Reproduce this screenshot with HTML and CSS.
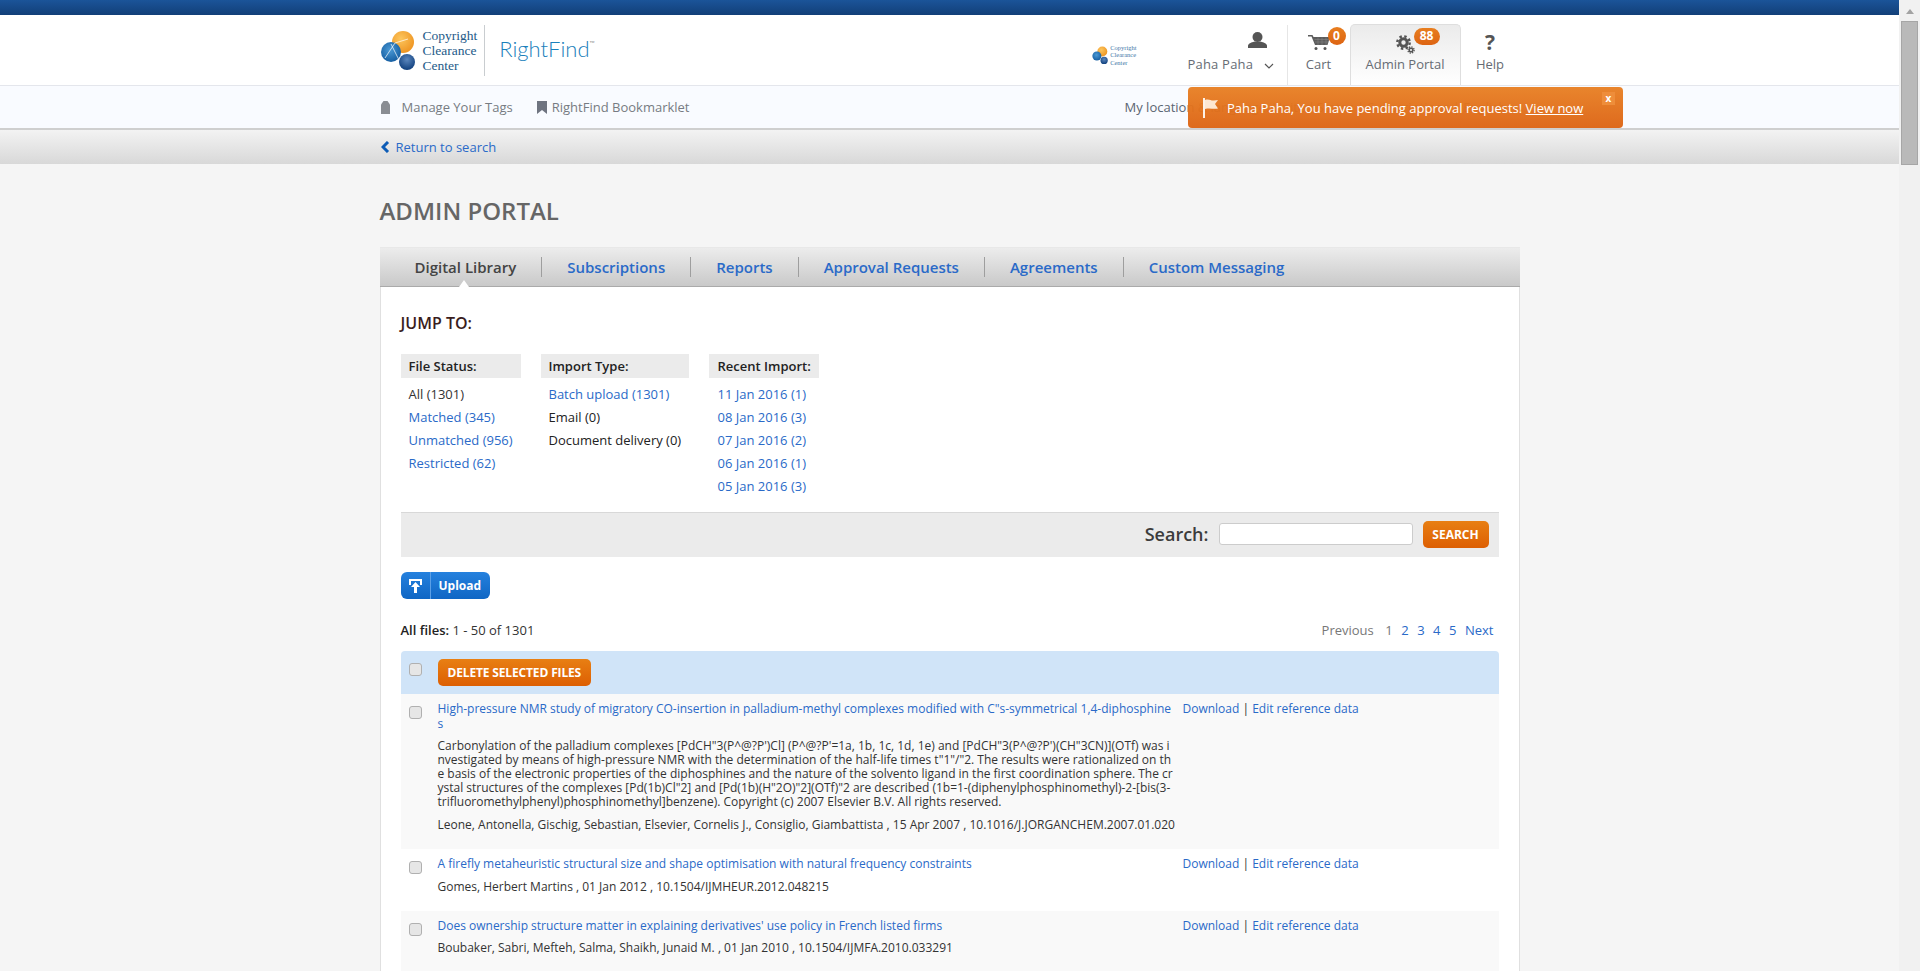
FILE: index.html
```html
<!DOCTYPE html>
<html lang="en">
<head>
  <meta charset="UTF-8" />
  <title>RightFind - Admin Portal</title>
  <link rel="stylesheet" href="styles.css">
</head>
<body>

  <div class="page">
    <div class="topbar"></div>

    <header class="header">
      <div class="wrap header-row">
        <a class="logo">
          <svg class="logo-balls" width="36" height="42" viewBox="0 0 36 42">
            <defs>
              <radialGradient id="orange" cx="40%" cy="35%" r="70%"><stop offset="0" stop-color="#fcc65e"/><stop offset="1" stop-color="#ee9320"/></radialGradient>
              <radialGradient id="blue" cx="45%" cy="40%" r="65%"><stop offset="0" stop-color="#4b9ad6"/><stop offset="1" stop-color="#125a9e"/></radialGradient>
              <radialGradient id="navy" cx="50%" cy="35%" r="65%"><stop offset="0" stop-color="#5a86bd"/><stop offset="1" stop-color="#0f3f7d"/></radialGradient>
            </defs>
            <circle cx="22" cy="12" r="11" fill="url(#orange)"/>
            <circle cx="10" cy="22" r="10" fill="url(#blue)"/>
            <circle cx="26" cy="32" r="8" fill="url(#navy)"/>
            <path d="M10 14 L18 30 M4 28 L14 13 L27 9" stroke="#fff" stroke-width="0.7" fill="none"/>
          </svg>
          <span class="logo-name">Copyright<br>Clearance<br>Center</span>
        </a>
        <span class="logo-product">RightFind<sup>™</sup></span>

        <div class="header-right">
          <a class="logo logo-small">
            <svg width="17" height="19" viewBox="0 0 36 42">
              <circle cx="22" cy="12" r="11" fill="url(#orange)"/>
              <circle cx="10" cy="22" r="10" fill="url(#blue)"/>
              <circle cx="26" cy="32" r="8" fill="url(#navy)"/>
            </svg>
            <span class="logo-name">Copyright<br>Clearance<br>Center</span>
          </a>

          <nav class="usernav">
            <a class="usernav-item user">
              <span class="usernav-icon">
                <svg width="19" height="16" viewBox="0 0 19 16"><ellipse cx="9.500" cy="5" rx="5" ry="5" fill="#555"/><path d="M0 16v-2.500c0-1.500 3-3 6.500-4h6c3.500 1 6.500 2.500 6.500 4V16z" fill="#555"/></svg>
              </span>
              <span class="usernav-label">Paha Paha<svg class="caret" width="10" height="6" viewBox="0 0 10 6"><path d="M1 1l4 4 4-4" fill="none" stroke="#555" stroke-width="1.200"/></svg></span>
            </a>
            <a class="usernav-item cart">
              <span class="usernav-icon">
                <svg width="22" height="15" viewBox="0 0 22 15"><path d="M0 0h4.500l1 2H22l-2.500 8H7L3.500 1.500H0z" fill="#5c5c5c"/><path d="M6.500 4.500h15M7 7h13.500M10 2.500V10M14 2.500V10M18 2.500V10" stroke="#8b8b8b" stroke-width="0.500" fill="none"/><circle cx="8" cy="13.500" r="1.500" fill="#555"/><circle cx="17" cy="13.500" r="1.500" fill="#555"/></svg>
              </span>
              <span class="usernav-label">Cart</span>
              <b class="badge">0</b>
            </a>
            <a class="usernav-item admin active">
              <span class="usernav-icon">
                <svg width="19" height="19" viewBox="0 0 19 19" fill="none" stroke="#555">
                  <circle cx="7.500" cy="7.500" r="3.700" stroke-width="3"/>
                  <circle cx="7.500" cy="7.500" r="6.200" stroke-width="2.400" stroke-dasharray="2.430 2.440"/>
                  <circle cx="15" cy="15" r="1.800" stroke-width="1.500"/>
                  <circle cx="15" cy="15" r="3.100" stroke-width="1.400" stroke-dasharray="1.220 1.215"/>
                </svg>
              </span>
              <span class="usernav-label">Admin Portal</span>
              <b class="badge badge-wide">88</b>
            </a>
            <a class="usernav-item help">
              <span class="usernav-icon help-mark">?</span>
              <span class="usernav-label">Help</span>
            </a>
          </nav>
        </div>
      </div>
    </header>

    <div class="subnav">
      <div class="wrap subnav-row">
        <a class="subnav-link tags">
          <svg width="9" height="13" viewBox="0 0 9 13"><path d="M0 3.500L2.500 0h4L9 3.500V13H0z" fill="#8a8d93"/></svg>
          Manage Your Tags
        </a>
        <a class="subnav-link bookmark">
          <svg width="10" height="13" viewBox="0 0 10 13"><path d="M0 0h10v13L5 9l-5 4z" fill="#6f7480"/></svg>
          RightFind Bookmarklet
        </a>
        <span class="location">My location &amp; language: United States | Subscriptions | English</span>
      </div>
      <div class="notice">
        <svg width="15" height="20" viewBox="0 0 15 20"><path d="M0 0h2v20H0z" fill="#fdf1e6"/><path d="M2 2c4-1.500 6 1 9 .5l4-.5-3 4 3 4.500c-5 1-8-1-13 .5z" fill="#fde7d2"/></svg>
        <span>Paha Paha, You have pending approval requests! <a>View now</a></span>
        <b class="notice-close">x</b>
      </div>
    </div>

    <div class="backbar">
      <div class="wrap">
        <a class="back"><svg width="9" height="12" viewBox="0 0 9 12"><path d="M7 1L2 6l5 5" fill="none" stroke="#0d5cb6" stroke-width="3"/></svg> Return to search</a>
      </div>
    </div>

    <main class="wrap content">
      <h1>ADMIN PORTAL</h1>

      <ul class="tabs">
        <li class="current">Digital Library</li>
        <li><a>Subscriptions</a></li>
        <li><a>Reports</a></li>
        <li><a>Approval Requests</a></li>
        <li><a>Agreements</a></li>
        <li><a>Custom Messaging</a></li>
      </ul>

      <section class="panel">
        <h2>JUMP TO:</h2>

        <div class="jump">
          <div class="jump-col col-status">
            <h3>File Status:</h3>
            <ul>
              <li>All (1301)</li>
              <li><a>Matched (345)</a></li>
              <li><a>Unmatched (956)</a></li>
              <li><a>Restricted (62)</a></li>
            </ul>
          </div>
          <div class="jump-col col-type">
            <h3>Import Type:</h3>
            <ul>
              <li><a>Batch upload (1301)</a></li>
              <li class="plain">Email (0)</li>
              <li class="plain">Document delivery (0)</li>
            </ul>
          </div>
          <div class="jump-col col-recent">
            <h3>Recent Import:</h3>
            <ul>
              <li><a>11 Jan 2016 (1)</a></li>
              <li><a>08 Jan 2016 (3)</a></li>
              <li><a>07 Jan 2016 (2)</a></li>
              <li><a>06 Jan 2016 (1)</a></li>
              <li><a>05 Jan 2016 (3)</a></li>
            </ul>
          </div>
        </div>

        <form class="search">
          <label for="q">Search:</label>
          <input type="text" id="q">
          <button type="button" class="btn-orange">SEARCH</button>
        </form>

        <button type="button" class="upload">
          <span class="upload-icon"><svg width="13" height="14" viewBox="0 0 13 14"><path d="M0 0h13v6h-2V2H2v4H0z" fill="#fff"/><path d="M6.500 3L11 8H8v6H5V8H2z" fill="#fff"/></svg></span>
          <span class="upload-text">Upload</span>
        </button>

        <div class="listing-head">
          <span><b>All files:</b> 1 - 50 of 1301</span>
          <span class="pager"><i>Previous</i><i>1</i><a>2</a><a>3</a><a>4</a><a>5</a><a>Next</a></span>
        </div>

        <div class="bulk">
          <input type="checkbox" class="check">
          <button type="button" class="btn-orange">DELETE SELECTED FILES</button>
        </div>

        <article class="file shaded">
          <input type="checkbox" class="check">
          <div class="file-main">
            <a class="file-title">High-pressure NMR study of migratory CO-insertion in palladium-methyl complexes modified with C"s-symmetrical 1,4-diphosphine<br>s</a>
            <p class="abstract">Carbonylation of the palladium complexes [PdCH"3(P^@?P')Cl] (P^@?P'=1a, 1b, 1c, 1d, 1e) and [PdCH"3(P^@?P')(CH"3CN)](OTf) was i<br>nvestigated by means of high-pressure NMR with the determination of the half-life times t"1"/"2. The results were rationalized on th<br>e basis of the electronic properties of the diphosphines and the nature of the solvento ligand in the first coordination sphere. The cr<br>ystal structures of the complexes [Pd(1b)Cl"2] and [Pd(1b)(H"2O)"2](OTf)"2 are described (1b=1-(diphenylphosphinomethyl)-2-[bis(3-<br>trifluoromethylphenyl)phosphinomethyl]benzene). Copyright (c) 2007 Elsevier B.V. All rights reserved.</p>
            <p class="meta">Leone, Antonella, Gischig, Sebastian, Elsevier, Cornelis J., Consiglio, Giambattista , 15 Apr 2007 , 10.1016/J.JORGANCHEM.2007.01.020</p>
          </div>
          <div class="file-actions"><a>Download</a> | <a>Edit reference data</a></div>
        </article>

        <article class="file">
          <input type="checkbox" class="check">
          <div class="file-main">
            <a class="file-title">A firefly metaheuristic structural size and shape optimisation with natural frequency constraints</a>
            <p class="meta">Gomes, Herbert Martins , 01 Jan 2012 , 10.1504/IJMHEUR.2012.048215</p>
          </div>
          <div class="file-actions"><a>Download</a> | <a>Edit reference data</a></div>
        </article>

        <article class="file shaded">
          <input type="checkbox" class="check">
          <div class="file-main">
            <a class="file-title">Does ownership structure matter in explaining derivatives' use policy in French listed firms</a>
            <p class="meta">Boubaker, Sabri, Mefteh, Salma, Shaikh, Junaid M. , 01 Jan 2010 , 10.1504/IJMFA.2010.033291</p>
          </div>
          <div class="file-actions"><a>Download</a> | <a>Edit reference data</a></div>
        </article>
      </section>
    </main>
  </div>

  <aside class="scrollbar">
    <svg width="8" height="5" viewBox="0 0 8 5"><path d="M4 0l4 5H0z" fill="#a3a3a3"/></svg>
    <div class="scrollbar-thumb"></div>
  </aside>

</body>
</html>
```
FILE: styles.css
```css
* {
  box-sizing: border-box;
}

html,
body {
  height: 971px;
  overflow: hidden;
}

body {
  display: flex;
  margin: 0;
  font-family: 'Open Sans', sans-serif;
  font-size: 12px;
  color: #333;
  background: #f5f5f5;
}

a {
  color: #2a6ac8;
  text-decoration: none;
}

ul {
  list-style: none;
  margin: 0;
  padding: 0;
}

.page {
  flex: 1;
  min-width: 0;
  height: 971px;
  overflow: hidden;
}

.wrap {
  width: 1140px;
  margin: 0 auto;
}

.topbar {
  height: 15px;
  background: linear-gradient(to bottom, #1b5499, #123f78);
}

/* header */
.header {
  height: 71px;
  background: #fff;
  border-bottom: 1px solid #e4e6ec;
}

.header-row {
  display: flex;
  align-items: flex-start;
}

.logo {
  display: flex;
  align-items: center;
  gap: 6px;
  height: 51px;
  margin-top: 10px;
  padding-right: 7px;
  border-right: 1px solid #c9cdd0;
}

.logo-balls {
  margin-left: 1px;
}

.logo-name {
  font-family: 'Liberation Serif', serif;
  font-size: 13.500px;
  line-height: 15px;
  color: #245a88;
}

.logo-product {
  margin: 21px 0 0 14px;
  font-family: 'Lato', sans-serif;
  font-weight: 300;
  font-size: 22px;
  line-height: 26px;
  color: #1a80bb;
}

.logo-product sup {
  font-size: 7px;
  line-height: 0;
  vertical-align: 11px;
  color: #555;
}

.header-right {
  display: flex;
  margin-left: auto;
}

.logo-small {
  height: 22px;
  margin: 29px 51px 0 0;
  padding: 0;
  border: 0;
  gap: 1px;
}

.logo-small .logo-name {
  font-size: 6.500px;
  line-height: 7.500px;
  color: #3f78a8;
}

.usernav {
  display: flex;
}

.usernav-item {
  position: relative;
  display: flex;
  flex-direction: column;
  align-items: center;
  height: 60px;
  margin-top: 10px;
  padding-top: 7px;
  font-size: 13px;
  color: #666c74;
}

.usernav-icon {
  display: block;
  height: 23px;
}

.usernav-icon svg {
  display: block;
}

.usernav-label {
  line-height: 19px;
  white-space: nowrap;
}

.user {
  width: 100px;
  align-items: flex-start;
  border-right: 1px solid #e6e6e6;
}

.user .usernav-icon {
  margin-left: 60px;
}

.user .usernav-label {
  letter-spacing: 0.200px;
}

.caret {
  margin-left: 11px;
}

.cart {
  width: 62px;
}

.cart .usernav-icon,
.admin .usernav-icon {
  padding-top: 3px;
}

.admin {
  width: 111px;
  height: 61px;
  margin-top: 9px;
  padding-top: 7px;
  background: linear-gradient(to bottom, #ebebeb, #fff);
  border: 1px solid #dedede;
  border-bottom: 0;
  border-radius: 5px 5px 0 0;
}

.help {
  width: 59px;
}

.help-mark {
  font-size: 21px;
  font-weight: 700;
  line-height: 21px;
  color: #555;
}

.badge {
  position: absolute;
  top: 2px;
  left: 40px;
  width: 18px;
  height: 18px;
  border-radius: 9px;
  font-size: 12px;
  font-weight: 700;
  line-height: 17px;
  text-align: center;
  color: #fff;
  background: linear-gradient(to bottom, #e87e1f, #dd6413);
}

.badge-wide {
  top: 3px;
  left: 63px;
  width: 26px;
  height: 17px;
  line-height: 16px;
}

/* sub navigation */
.subnav {
  position: relative;
  height: 44px;
  background: #f9fbff;
  border-bottom: 2px solid #cfcfcf;
}

.subnav-row {
  display: flex;
  align-items: center;
  height: 42px;
  padding-left: 1px;
  color: #777b82;
}

.subnav-link {
  display: flex;
  align-items: center;
  font-size: 13px;
  color: #777b82;
}

.tags {
  gap: 12px;
  margin-right: 24px;
}

.bookmark {
  gap: 5px;
}

.location {
  margin-left: 435px;
  font-size: 13px;
  white-space: nowrap;
  color: #5b6572;
}

.notice {
  position: absolute;
  top: 1px;
  left: 1188px;
  display: flex;
  align-items: center;
  gap: 9px;
  width: 435px;
  height: 41px;
  padding-left: 15px;
  border-radius: 4px;
  font-size: 13px;
  color: #fff;
  background: linear-gradient(to bottom, rgba(232, 128, 36, 0.96), rgba(221, 100, 20, 0.96));
}

.notice a {
  color: #fff;
  text-decoration: underline;
}

.notice-close {
  position: absolute;
  top: 5px;
  right: 8px;
  width: 13px;
  height: 13px;
  font-size: 10px;
  line-height: 12px;
  text-align: center;
  background: #ee8d3a;
}

.backbar {
  height: 34px;
  background: linear-gradient(to bottom, #f3f3f3, #d8d8d8);
}

.back {
  display: flex;
  align-items: center;
  gap: 6px;
  height: 34px;
  padding-left: 1px;
  font-size: 13px;
}

/* content */
h1 {
  margin: 0;
  padding-top: 30px;
  height: 83px;
  font-size: 24px;
  font-weight: 600;
  line-height: 34px;
  color: #666;
}

.tabs {
  display: flex;
  align-items: center;
  height: 40px;
  padding: 0 9px 0 10px;
  border-top: 1px solid #e8e8e8;
  background: linear-gradient(to bottom, #ececec, #c9c9c9);
  border-bottom: 1px solid #aaa;
  font-size: 15px;
  font-weight: 600;
}

.tabs li {
  position: relative;
  height: 20px;
  padding: 0 25px;
  line-height: 21px;
  border-right: 1px solid #9e9e9e;
}

.tabs li:last-child {
  border-right: 0;
}

.tabs a {
  color: #2a6ac8;
}

.tabs .current {
  color: #444;
}

.tabs .current::after {
  content: "";
  position: absolute;
  left: 69px;
  bottom: -10px;
  border: 5px solid transparent;
  border-top: 0;
  border-bottom: 7px solid #fff;
}

.panel {
  min-height: 700px;
  padding: 26px 20px 0;
  background: #fff;
  border: 1px solid #e0e0e0;
  border-top: 0;
}

h2 {
  margin: 0;
  font-size: 16px;
  font-weight: 600;
  line-height: 20px;
  color: #3a1d1d;
}

.jump {
  display: flex;
  gap: 20px;
  height: 158px;
  margin-top: 21px;
  font-size: 13px;
}

.jump-col h3 {
  height: 24px;
  margin: 0 0 5px;
  padding-left: 8px;
  font-size: 13px;
  font-weight: 600;
  line-height: 24px;
  color: #222;
  background: #ebebeb;
}

.jump-col li {
  height: 23px;
  padding-left: 8px;
  line-height: 23px;
}

.col-status { width: 120px; }
.col-type { width: 148px; }
.col-recent { width: 110px; }

.col-recent h3,
.col-recent li {
  padding-left: 9px;
}

.plain {
  color: #222;
}

.search {
  display: flex;
  align-items: center;
  justify-content: flex-end;
  height: 45px;
  padding: 0 10px 2px 0;
  border-top: 1px solid #d8d8d8;
  background: #ebebeb;
}

.search label {
  margin-right: 10px;
  font-size: 18px;
  font-weight: 600;
  color: #3c3c3c;
}

.search input {
  width: 194px;
  height: 22px;
  margin-right: 10px;
  padding: 0 4px;
  border: 1px solid #ccc;
  border-radius: 3px;
  background: #fff;
}

.search .btn-orange {
  width: 66px;
  padding: 0;
}

.btn-orange {
  height: 27px;
  padding: 0 10px;
  border: 0;
  border-radius: 5px;
  font-family: inherit;
  font-size: 12px;
  font-weight: 700;
  color: #fff;
  background: linear-gradient(to bottom, #e87f13, #dd5f03);
}

.upload {
  display: flex;
  align-items: center;
  height: 27px;
  margin-top: 15px;
  padding: 0;
  border: 0;
  border-radius: 6px;
  font-family: inherit;
  font-size: 12px;
  font-weight: 700;
  color: #fff;
  background: linear-gradient(to bottom, #2581de, #0f66c4);
}

.upload-icon {
  display: flex;
  align-items: center;
  justify-content: center;
  width: 30px;
  height: 27px;
  border-right: 1px solid #5b9fe6;
}

.upload-text {
  padding: 0 9px 0 8px;
}

.listing-head {
  display: flex;
  justify-content: space-between;
  align-items: center;
  height: 20px;
  margin: 21px 0 11px;
  padding-right: 5px;
  font-size: 13px;
}

.listing-head b {
  font-weight: 600;
  color: #222;
}

.pager {
  display: flex;
  gap: 8.500px;
}

.pager i {
  font-style: normal;
  color: #777;
}

.pager i:first-child {
  margin-right: 3px;
}

.bulk {
  display: flex;
  align-items: flex-start;
  height: 43px;
  padding-top: 8px;
  border-radius: 4px 4px 0 0;
  background: #d0e4f8;
}

.check {
  flex: none;
  width: 13px;
  height: 13px;
  margin: 4px 0 0 8px;
  appearance: none;
  background: #e6e6e6;
  border: 1px solid #b0b0b0;
  border-radius: 3px;
}

.bulk .btn-orange {
  margin-left: 16px;
  letter-spacing: -0.150px;
}

.file {
  display: flex;
  align-items: flex-start;
  padding: 8px 0 17px;
}

.shaded {
  background: #f9f9f9;
}

.file-main {
  flex: none;
  width: 740px;
  margin-left: 16px;
  white-space: nowrap;
}

.file-title {
  display: block;
  line-height: 14.500px;
}

.abstract {
  margin: 8px 0 0;
  line-height: 14px;
}

.meta {
  margin: 9px 0 0;
  line-height: 14px;
}

.file-title + .meta {
  margin-top: 8px;
}

.file-actions {
  margin-left: 5px;
  line-height: 14.500px;
}

/* drawn by hand, the page itself does not scroll */
.scrollbar {
  flex: none;
  width: 21px;
  height: 971px;
  padding: 9px 0 0 2px;
  background: #f1f1f1;
}

.scrollbar svg {
  display: block;
  margin: 0 0 7px 5px;
}

.scrollbar-thumb {
  width: 17px;
  height: 144px;
  background: #b9b9b9;
  border: 1px solid #a6a6a6;
}
```
